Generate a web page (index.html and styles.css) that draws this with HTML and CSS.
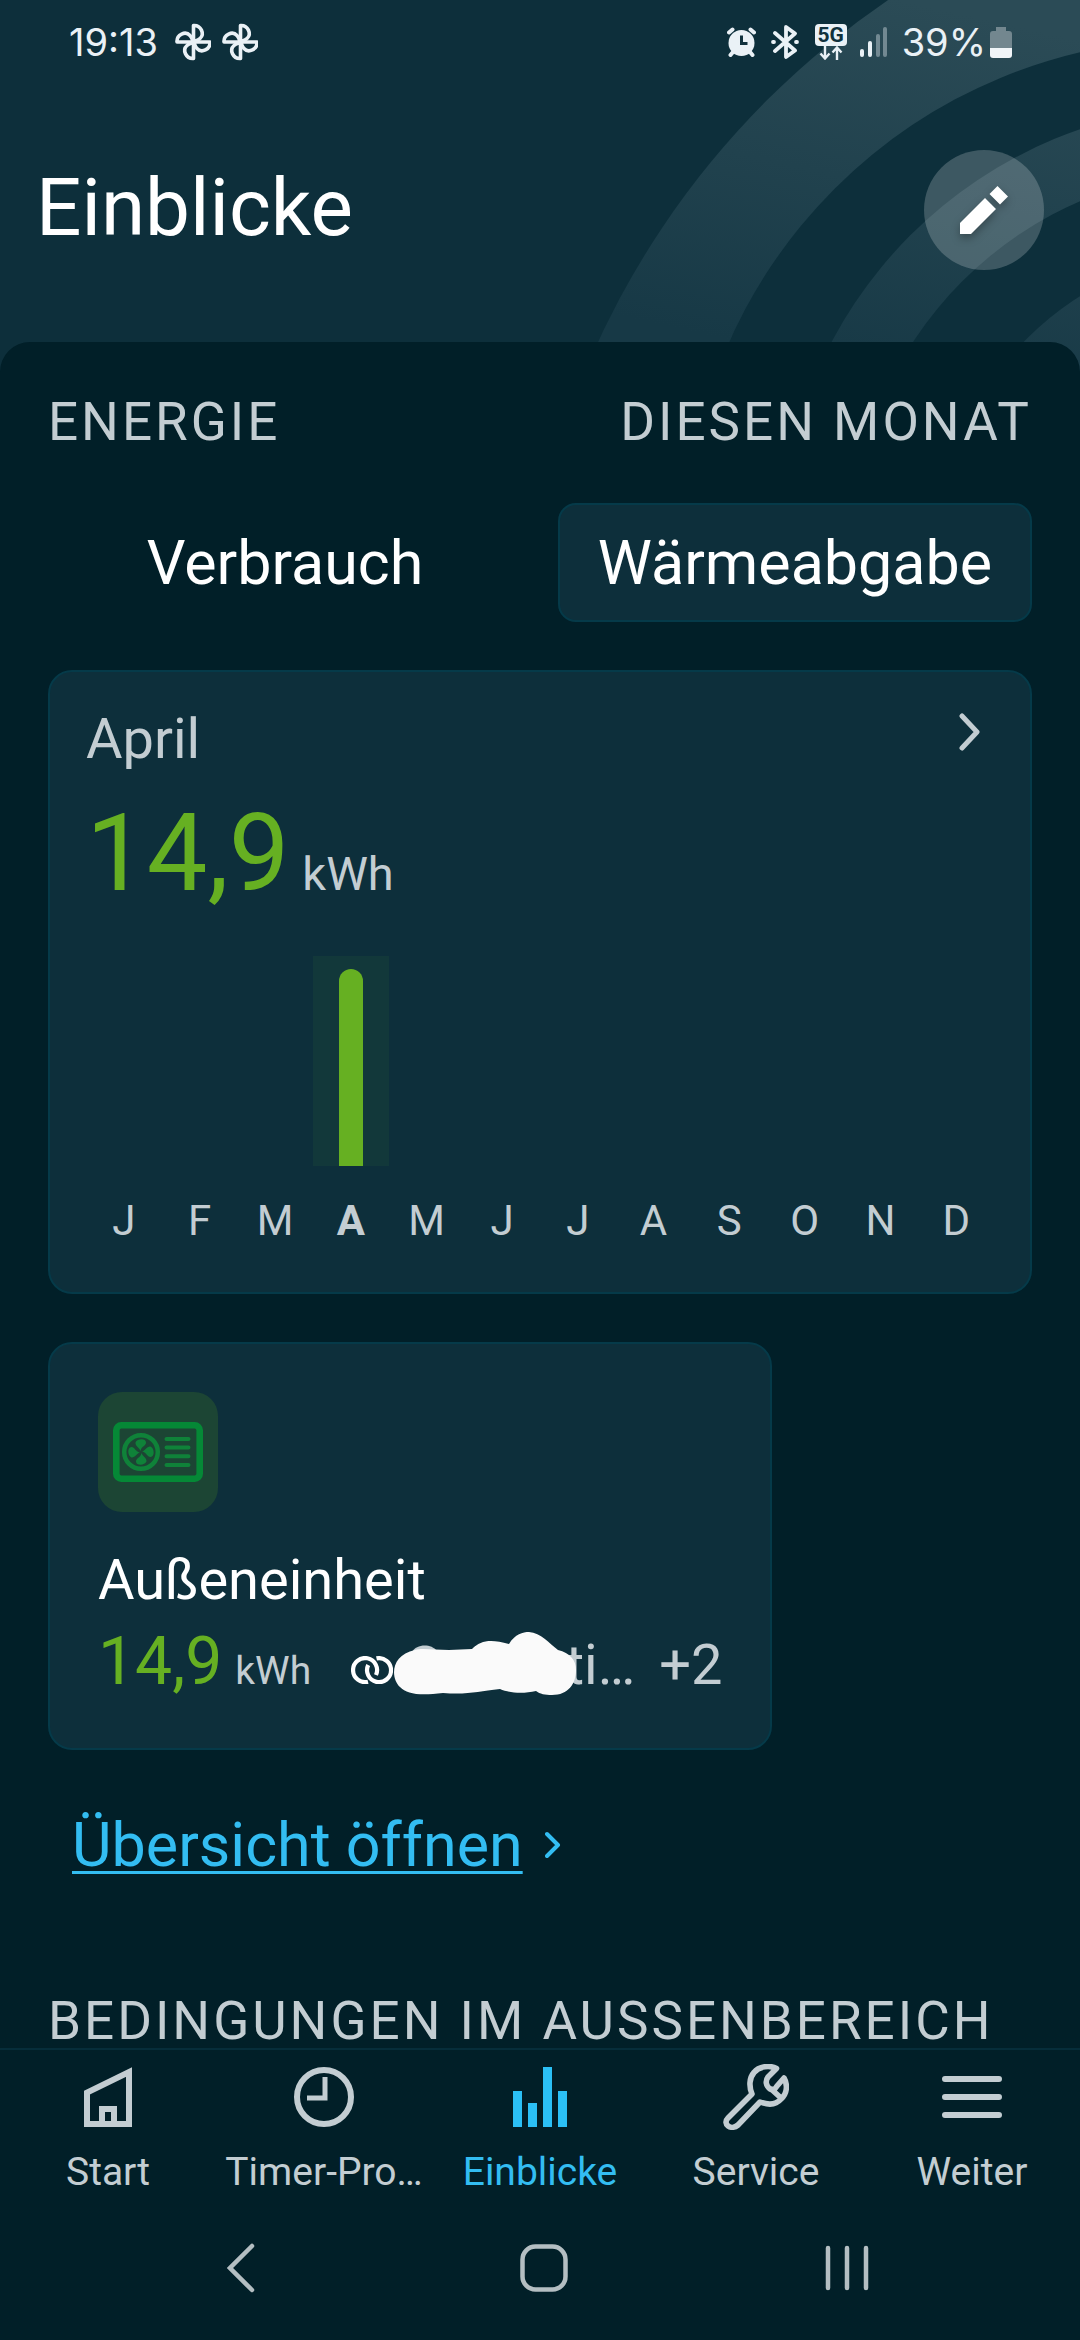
FILE: index.html
```html
<!DOCTYPE html>
<html lang="de">
<head>
<meta charset="utf-8">
<meta name="viewport" content="width=device-width, initial-scale=1">
<title>Einblicke</title>
<link rel="stylesheet" href="styles.css">
</head>
<body>
<div class="screen">
  <div class="top">
    <svg class="rings" width="490" height="376" viewBox="590 0 490 376" aria-hidden="true">
      <defs>
        <linearGradient id="ring" gradientUnits="userSpaceOnUse" x1="900" y1="0" x2="820" y2="360">
          <stop offset="0" stop-color="#2b4b56"/>
          <stop offset="1" stop-color="#173946"/>
        </linearGradient>
      </defs>
      <circle cx="1362" cy="696" r="842" fill="url(#ring)"/>
      <circle cx="1196" cy="550" r="511" fill="#0d2f3b"/>
      <circle cx="1225" cy="550" r="445" fill="url(#ring)"/>
      <circle cx="1231" cy="550" r="380" fill="#0d2f3b"/>
      <circle cx="1240" cy="550" r="300" fill="url(#ring)"/>
    </svg>
    <div class="status">
      <div class="status-group">
        <span class="status-text">19:13</span>
        <svg class="fan" width="36" height="38" viewBox="0 0 36 38"><g fill="none" stroke="#eaf1f6" stroke-width="3.6" stroke-linejoin="round"><path id="blade" d="M18.5 19V2.5C26 2 30 11 25 15.500C23 17.500 20 18 18.500 19"/><use href="#blade" transform="rotate(90 18.500 19)"/><use href="#blade" transform="rotate(180 18.500 19)"/><use href="#blade" transform="rotate(270 18.500 19)"/></g></svg>
        <svg class="fan" width="36" height="38" viewBox="0 0 36 38"><g fill="none" stroke="#eaf1f6" stroke-width="3.6" stroke-linejoin="round"><use href="#blade"/><use href="#blade" transform="rotate(90 18.500 19)"/><use href="#blade" transform="rotate(180 18.500 19)"/><use href="#blade" transform="rotate(270 18.500 19)"/></g></svg>
      </div>
      <div class="status-group status-right">
        <svg class="alarm" width="29" height="30" viewBox="0 0 29 30"><g stroke="#eaf1f6" stroke-width="4" stroke-linecap="round"><path d="M2 5.500L5.500 2.500M27 5.500L23.500 2.500M6 25L3.500 28M23 25L25.500 28"/></g><circle cx="14.500" cy="16" r="13" fill="#eaf1f6"/><path d="M14.500 8.500V16.500H20.500" fill="none" stroke="#10313d" stroke-width="3"/></svg>
        <svg class="bluetooth" width="28" height="34" viewBox="0 0 28 34"><path d="M4 8L24 25.500L15 32V2L24 8.500L4 26M2 17H3M25 17H26" fill="none" stroke="#eaf1f6" stroke-width="3.800" stroke-linejoin="round" stroke-linecap="round"/></svg>
        <div class="mobile">
          <span class="mobile-tag">5G</span>
          <svg width="24" height="14" viewBox="0 0 24 14"><path d="M6 0V12M1.500 7.500L6 12.500L10.500 7.500M18 14V2M13.500 6.500L18 1.500L22.500 6.500" fill="none" stroke="#eaf1f6" stroke-width="2.400"/></svg>
        </div>
        <svg class="signal" width="28" height="30" viewBox="0 0 28 30"><g fill="#eaf1f6"><rect x="0" y="22" width="4" height="8" rx="2"/><rect x="8" y="14" width="4" height="16" rx="2"/><g opacity=".38"><rect x="16" y="7" width="4" height="23" rx="2"/><rect x="23" y="0" width="4" height="30" rx="2"/></g></g></svg>
        <span class="status-text">39%</span>
        <svg class="battery" width="22" height="31" viewBox="0 0 22 31"><path d="M6 0H16V4H19Q22 4 22 7V21H0V7Q0 4 3 4H6Z" fill="#73878f"/><path d="M0 21H22V28Q22 31 19 31H3Q0 31 0 28Z" fill="#f1f5f8"/></svg>
      </div>
    </div>
    <header class="header">
      <h1 class="title">Einblicke</h1>
      <button class="edit" type="button" aria-label="Bearbeiten">
        <svg width="48" height="48" viewBox="0 0 48 48"><path d="M37.500 0L48 10.500L40 18.500L29.500 8ZM25 12L36 23L11 48H0V37Z" fill="#fff"/></svg>
      </button>
    </header>
  </div>

  <main class="panel">
    <section>
      <div class="section-head">
        <h2 class="section-title">Energie</h2>
        <span class="section-title">Diesen Monat</span>
      </div>
      <div class="tabs" role="tablist">
        <button class="tab" type="button" role="tab" aria-selected="false">Verbrauch</button>
        <button class="tab tab-active" type="button" role="tab" aria-selected="true">Wärmeabgabe</button>
      </div>

      <article class="card chart-card">
        <div class="chart-head">
          <h3 class="month">April</h3>
          <svg width="22" height="38" viewBox="0 0 22 38" aria-hidden="true"><path d="M3 3L18 19L3 35" fill="none" stroke="#c3cdd2" stroke-width="5" stroke-linecap="round" stroke-linejoin="round"/></svg>
        </div>
        <p class="reading reading-large"><span class="number">14,9</span><span class="unit">kWh</span></p>
        <div class="chart">
          <div class="col"></div><div class="col"></div><div class="col"></div>
          <div class="col col-active"><div class="bar" style="height:94%"></div></div>
          <div class="col"></div><div class="col"></div><div class="col"></div><div class="col"></div>
          <div class="col"></div><div class="col"></div><div class="col"></div><div class="col"></div>
        </div>
        <div class="months">
          <span>J</span><span>F</span><span>M</span><b>A</b><span>M</span><span>J</span><span>J</span><span>A</span><span>S</span><span>O</span><span>N</span><span>D</span>
        </div>
      </article>

      <article class="card device">
        <div class="device-icon">
          <svg width="90" height="60" viewBox="0 0 90 60"><rect x="3.300" y="3.300" width="83.400" height="53.400" rx="5" fill="none" stroke="#058836" stroke-width="6.600"/><g stroke="#0f8239" fill="none"><circle cx="28" cy="30" r="16.800" stroke-width="4.500"/><path d="M53.500 17H75.500M53.500 25.600H75.500M53.500 34.300H75.500M53.500 43H75.500" stroke-width="4" stroke-linecap="round"/></g><g fill="#0f8239"><path id="vane" d="M27.500 29C27 26 22 24 22.500 20.500C24 16.500 33 16 33 20.500C33 24 28.500 24 27.500 29Z"/><use href="#vane" transform="rotate(90 28 30)"/><use href="#vane" transform="rotate(180 28 30)"/><use href="#vane" transform="rotate(270 28 30)"/></g></svg>
        </div>
        <h3 class="device-name">Außeneinheit</h3>
        <div class="device-row">
          <p class="reading reading-small"><span class="number">14,9</span><span class="unit">kWh</span></p>
          <div class="linked">
            <svg class="link-icon" width="42" height="28" viewBox="0 0 42 28"><g fill="none" stroke="#fff" stroke-width="4.200"><path d="M17 25.700A12 12 0 1 1 25 19"/><path d="M25.500 2.400A12 12 0 1 1 17.200 9"/></g></svg>
            <div class="rooms">ti…
              <svg class="scribble" width="184" height="66" viewBox="0 0 184 66"><g fill="#c3cdd2"><path d="M19 22C23 14 38 13 44 21Z"/><path d="M82 16h5v8h-5z"/></g><path d="M22 20C28 18 42 20 56 20L79 19C88 10 98 9 116 14C122 4 130 2 136 2C148 3 156 13 165 20C177 23 183 30 183 40C183 54 175 65 159 65C152 65 147 64 143 61C130 64 116 63 107 59C85 61 76 65 50 63C26 66 14 64 7 57C-3 47 -2 25 22 20Z" fill="#fafafa"/></svg>
            </div>
            <span class="more">+2</span>
          </div>
        </div>
      </article>

      <a class="overview" href="#uebersicht"><span>Übersicht öffnen</span><svg width="16" height="28" viewBox="0 0 16 28" aria-hidden="true"><path d="M2 3L13 14L2 25" fill="none" stroke="#33bdf2" stroke-width="4" stroke-linecap="round" stroke-linejoin="round"/></svg></a>
    </section>
    <section>
      <h2 class="section-title outdoor">Bedingungen im Aussenbereich</h2>
    </section>
  </main>

  <nav class="nav">
    <a class="nav-item" href="#start">
      <svg width="66" height="66" viewBox="0 0 66 66"><path d="M12 60V28.500L54 8V60Z" fill="none" stroke="#c3cdd2" stroke-width="6"/><path d="M27 60V45H39V60" fill="none" stroke="#c3cdd2" stroke-width="6"/></svg>
      <span>Start</span>
    </a>
    <a class="nav-item" href="#timer">
      <svg width="66" height="66" viewBox="0 0 66 66"><circle cx="33" cy="33" r="27" fill="none" stroke="#c3cdd2" stroke-width="6"/><path d="M34 13V34H16" fill="none" stroke="#c3cdd2" stroke-width="5"/></svg>
      <span>Timer-Pro…</span>
    </a>
    <a class="nav-item nav-active" href="#einblicke" aria-current="page">
      <svg width="66" height="66" viewBox="0 0 66 66"><path d="M6 27h9v36h-9zM21 39h9v24h-9zM36 3h9v60h-9zM51 27h9v36h-9z" fill="#2bc0f6"/></svg>
      <span>Einblicke</span>
    </a>
    <a class="nav-item" href="#service">
      <svg width="66" height="66" viewBox="0 0 66 66"><path d="M5 54L29 30C26 23 26 14 31 8.500C36 2 47 1 53.500 4.500L45 13C42 17 43 22 47 25C50 27 52 25 54 22L61 14C65 21 64 30 58 35C53 41 45 41 37 38L15 61C8 67 -1 60 5 54ZM47 24L58 34" fill="none" stroke="#c3cdd2" stroke-width="5.600" stroke-linejoin="round"/></svg>
      <span>Service</span>
    </a>
    <a class="nav-item" href="#weiter">
      <svg width="66" height="66" viewBox="0 0 66 66"><path d="M6 15H60M6 33H60M6 51H60" stroke="#c3cdd2" stroke-width="6" stroke-linecap="round"/></svg>
      <span>Weiter</span>
    </a>
  </nav>
  <div class="system">
    <button type="button" aria-label="Zurück"><svg width="28" height="50" viewBox="0 0 28 50"><path d="M25 3L3 25L25 47" fill="none" stroke="#b4bec2" stroke-width="4.500" stroke-linecap="round"/></svg></button>
    <button type="button" aria-label="Startbildschirm"><svg width="48" height="48" viewBox="0 0 48 48"><rect x="2.500" y="2.500" width="43" height="43" rx="13" fill="none" stroke="#b4bec2" stroke-width="4.500"/></svg></button>
    <button type="button" aria-label="Letzte Apps"><svg width="44" height="46" viewBox="0 0 44 46"><path d="M3 3V43M22 3V43M41 3V43" stroke="#b4bec2" stroke-width="4.500" stroke-linecap="round"/></svg></button>
  </div>
</div>
</body>
</html>
```
FILE: styles.css
```css
* {
  box-sizing: border-box;
}

body {
  margin: 0;
  background: #011f28;
  color: #fff;
  font-family: Roboto, "Liberation Sans", sans-serif;
}

h1, h2, h3, p {
  margin: 0;
  font-weight: 400;
}

button {
  margin: 0;
  padding: 0;
  border: 0;
  background: none;
  color: inherit;
  font: inherit;
}

svg {
  display: block;
  flex: none;
}

.screen {
  display: flex;
  flex-direction: column;
  height: 100vh;
  overflow: hidden;
}

/* Header */
.top {
  position: relative;
  flex: none;
  margin-bottom: -34px;
  padding-bottom: 34px;
  background: #0d2f3b;
}

.rings {
  position: absolute;
  top: 0;
  right: 0;
}

.status {
  position: relative;
  display: flex;
  justify-content: space-between;
  height: 78px;
  padding: 6px 68px 0 69px;
}

.status-group {
  display: flex;
  align-items: center;
}

.status-text {
  color: #eaf1f6;
  font-family: Inter, Roboto, sans-serif;
  font-size: 38px;
  line-height: 48px;
}

.fan {
  margin-left: 11px;
}

.fan:nth-of-type(1) {
  margin-left: 17px;
}

.alarm {
  margin-right: 15px;
}

.bluetooth {
  margin-right: 16px;
}

.mobile {
  display: flex;
  flex-direction: column;
  align-items: center;
  margin-right: 13px;
}

.mobile-tag {
  width: 32px;
  border-radius: 4px;
  background: #eaf1f6;
  color: #10313d;
  font-size: 21px;
  font-weight: 700;
  line-height: 22px;
  text-align: center;
}

.signal {
  margin-right: 14px;
}

.battery {
  margin-left: 4px;
}

.header {
  position: relative;
  display: flex;
  align-items: center;
  justify-content: space-between;
  height: 264px;
  padding: 0 36px;
}

.title {
  padding-bottom: 4px;
  font-size: 80px;
  line-height: 120px;
}

.edit {
  display: grid;
  place-items: center;
  width: 120px;
  height: 120px;
  border-radius: 50%;
  background: rgba(255, 255, 255, 0.2);
}

.edit svg {
  filter: drop-shadow(0 4px 4px rgba(0, 0, 0, 0.3));
}

/* Content panel */
.panel {
  position: relative;
  flex: 1;
  min-height: 0;
  overflow: hidden;
  padding: 48px 48px 0;
  border-radius: 30px 30px 0 0;
  background: #011f28;
}

.section-head {
  display: flex;
  justify-content: space-between;
}

.section-title {
  color: #c3cdd2;
  font-size: 53px;
  line-height: 64px;
  letter-spacing: 3px;
  text-transform: uppercase;
}

.tabs {
  display: grid;
  grid-template-columns: 1fr 1fr;
  gap: 36px;
  margin: 49px 0 48px;
}

.tab {
  height: 119px;
  border: 2px solid transparent;
  border-radius: 18px;
  font-size: 61px;
  line-height: 72px;
}

.tab-active {
  border-color: #053a49;
  background: #0d2f3b;
}

.card {
  border: 2px solid #053a49;
  border-radius: 24px;
  background: #0d2f3b;
}

.chart-card {
  padding: 35px 36px 47px;
}

.chart-head {
  display: flex;
  align-items: flex-start;
  justify-content: space-between;
  padding-right: 13px;
}

.chart-head svg {
  margin-top: 6px;
}

.month {
  color: #c3cdd2;
  font-size: 56px;
  line-height: 64px;
}

.reading {
  display: flex;
  align-items: baseline;
}

.number {
  color: #66b022;
}

.unit {
  color: #c3cdd2;
  line-height: 48px;
}

.reading-large {
  gap: 13px;
  margin: 28px 0 49px;
  font-size: 108px;
  line-height: 108px;
}

.reading-large .unit {
  font-size: 47px;
}

.chart,
.months {
  display: grid;
  grid-template-columns: repeat(12, 1fr);
}

.chart {
  height: 210px;
}

.col {
  display: flex;
  align-items: flex-end;
  justify-content: center;
}

.col-active {
  background: #12383a;
}

.bar {
  width: 24px;
  border-radius: 12px 12px 0 0;
  background: #66b022;
}

.months {
  margin-top: 31px;
  color: #c3cdd2;
  font-size: 42px;
  line-height: 48px;
  text-align: center;
}

/* Device card */
.device {
  width: max-content;
  margin-top: 48px;
  padding: 48px;
}

.device-icon {
  display: grid;
  place-items: center;
  width: 120px;
  height: 120px;
  border-radius: 24px;
  background: #1c4534;
}

.device-name {
  margin: 36px 0 12px;
  font-size: 56px;
  line-height: 64px;
}

.device-row,
.linked {
  display: flex;
  align-items: baseline;
}

.device-row {
  gap: 40px;
}

.reading-small {
  gap: 13px;
  font-size: 66px;
  line-height: 76px;
}

.reading-small .unit {
  font-size: 39px;
}

.linked {
  color: #c3cdd2;
  font-size: 56px;
  line-height: 64px;
}

.rooms {
  position: relative;
  width: 242px;
  text-align: right;
}

.scribble {
  position: absolute;
  top: -3px;
  left: 0;
}

.more {
  margin-left: 24px;
}

.overview {
  display: flex;
  align-items: center;
  gap: 22px;
  width: max-content;
  margin: 59px 24px 0;
  color: #33bdf2;
  font-size: 61px;
  line-height: 72px;
  text-decoration: none;
}

.overview span {
  text-decoration: underline;
  text-decoration-thickness: 3px;
  text-underline-offset: 5px;
}

.outdoor {
  margin-top: 108px;
  white-space: nowrap;
}

/* Bottom navigation */
.nav {
  position: relative;
  flex: none;
  display: grid;
  grid-template-columns: repeat(5, 1fr);
  border-top: 2px solid #062d3a;
  background: #011f28;
}

.nav-item {
  display: flex;
  flex-direction: column;
  align-items: center;
  gap: 18px;
  padding-top: 14px;
  color: #c3cdd2;
  font-size: 39px;
  line-height: 48px;
  text-decoration: none;
}

.nav-active {
  color: #33bdf2;
}

.system {
  flex: none;
  display: grid;
  grid-template-columns: repeat(3, 1fr);
  height: 144px;
  padding: 0 82px 0 90px;
}

.system button {
  display: grid;
  place-items: center;
}
```
